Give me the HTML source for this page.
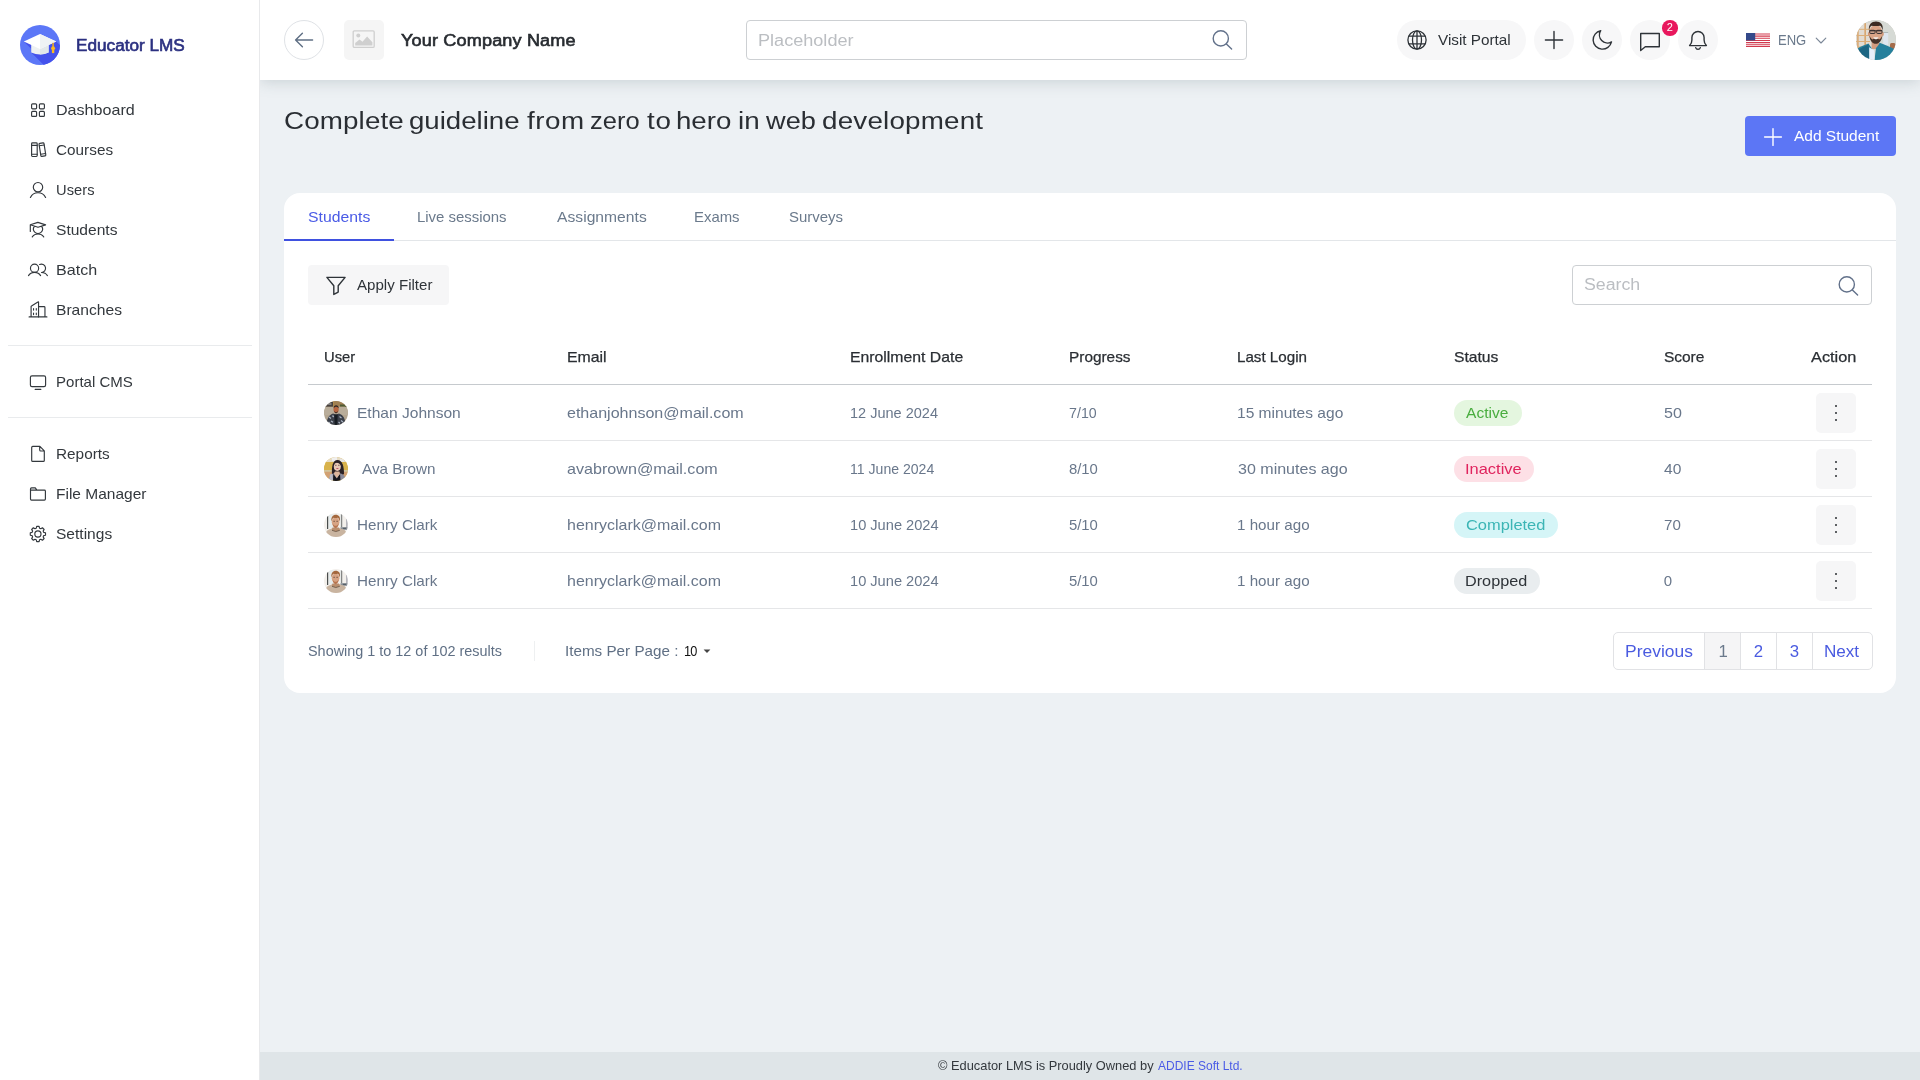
<!DOCTYPE html>
<html lang="en">
<head>
<meta charset="utf-8">
<title>Educator LMS</title>
<style>
*{box-sizing:border-box;margin:0;padding:0}
html,body{width:1920px;height:1080px;overflow:hidden}
body{font-family:"Liberation Sans",sans-serif;background:#edf1f4;color:#3b4046;position:relative;font-size:15px}
#wrap{position:absolute;left:0;top:0;width:1920px;height:1080px;will-change:transform}
.abs{position:absolute}
.t{position:absolute;white-space:nowrap;line-height:20px;height:20px;transform-origin:0 50%}
svg{display:block;position:absolute;overflow:visible}
/* sidebar */
#side{z-index:2;position:absolute;left:0;top:0;width:260px;height:1080px;background:#fff;border-right:1px solid #e8e9eb}
#logo{z-index:3;left:20px;top:25px;width:40px;height:40px}
#brand{z-index:3;left:76px;top:35.7px;font-size:16px;color:#2b3080;-webkit-text-stroke:.6px #2b3080}
.nav{z-index:3;color:#33383d;left:56px;font-size:15px}
.hr{z-index:3;position:absolute;left:8px;width:244px;height:1px;background:#e9ebed}
/* header */
#head{position:absolute;left:260px;top:0;width:1660px;height:80px;background:#fff;box-shadow:0 2px 14px rgba(115,132,138,.29)}
#back{left:284px;top:20px;width:40px;height:40px;border-radius:50%;border:1px solid #dfe2e6;background:#fff}
#imgph{left:344px;top:20px;width:40px;height:40px;border-radius:5px;background:#f5f5f5}
#company{left:400px;top:30.8px;font-size:16px;color:#272b30;-webkit-text-stroke:.6px #272b30}
#hsearch{left:746px;top:20px;width:501px;height:40px;border:1px solid #cdd0d3;border-radius:4px;background:#fff}
#ph{left:759px;top:30.8px;font-size:16px;color:#bbbec2}
.pill{position:absolute;background:#f7f7f8;border-radius:20px;height:44px;top:18px}
#visit{left:1437px;top:30px;font-size:15px;color:#2e3338}
#eng{left:1778px;top:30px;font-size:14.5px;color:#6b7a8c}
#badge{left:1662px;top:20.2px;width:15.6px;height:15.6px;border-radius:50%;background:#e8175d;color:#fff;font-size:11px;line-height:15.6px;text-align:center}
#avatar{left:1856px;top:20px;width:40px;height:40px;border-radius:50%;overflow:hidden;background:#c9c4bb}
/* title */
.tw{position:absolute;top:0;transform-origin:0 50%}
#title{left:284px;top:103.2px;width:720px;font-size:24.6px;line-height:36px;height:36px;color:#2a2e33}
#addbtn{left:1745px;top:116px;width:151px;height:40.4px;border-radius:4px;background:#5c76f5}
#addtxt{left:1793px;top:126.4px;color:#fff;font-size:15px}
/* card */
#card{left:284px;top:193px;width:1612px;height:500px;border-radius:16px;background:#fff}
#tabline{left:284px;top:240px;width:1612px;height:1px;background:#e3e6e9}
#tabact{left:284px;top:239px;width:110px;height:2px;background:#3f51e0}
.tab{top:207px;color:#6b7a8c;font-size:15px}
#filter{left:308px;top:265px;width:141px;height:40px;border-radius:4px;background:#f6f6f7}
#filtertxt{left:356px;top:275px;color:#2e3338}
#tsearch{left:1572px;top:265px;width:300px;height:40px;border:1px solid #cdd0d3;border-radius:4px;background:#fff}
#tsph{left:1584px;top:275.3px;font-size:16px;color:#bbbec2}
.th{top:347px;color:#2a2e33;font-size:15px;-webkit-text-stroke:.25px #2a2e33}
.line{position:absolute;left:308px;width:1564px;height:1px;background:#e5e6e8}
.td{color:#69778b;font-size:15px}
.av{position:absolute;left:324px;width:24px;height:24px;border-radius:50%;overflow:hidden}
.bdg{position:absolute;left:1454px;height:25.4px;border-radius:13px}
.act{position:absolute;left:1816px;width:40px;height:40px;border-radius:5px;background:#f6f6f7}
.dot{position:absolute;left:18.8px;width:2.4px;height:2.4px;border-radius:50%;background:#2a2e33}
.r1{top:403px}.r2{top:459px}.r3{top:515px}.r4{top:571px}
/* pagination */
#pager{left:1613px;top:632px;width:260px;height:38px;border:1px solid #e1e2e5;border-radius:5px;background:#fff;overflow:hidden}
.pg{top:642px;font-size:16.8px;color:#4a5be0}
/* footer */
#foot{left:260px;top:1052px;width:1660px;height:28px;background:#dfe5e8}
#foottxt{left:938px;top:1056.4px;font-size:13px;color:#33383d}
#footlink{left:1157px;top:1056.4px;font-size:13px;color:#4a5be6}
/*LS*/
#addtxt{letter-spacing:-0.010px;margin-left:0.80px;transform:scaleX(1.0339)}
#brand{letter-spacing:0.008px;margin-left:0.30px;transform:scaleX(1.0722)}
#company{letter-spacing:0.133px;margin-left:1.05px;transform:scaleX(1.1300)}
#eng{letter-spacing:-0.056px;margin-left:0.30px;transform:scaleX(0.8992)}
#filtertxt{letter-spacing:0.014px;margin-left:0.55px;transform:scaleX(1.0040)}
#footlink{letter-spacing:0.004px;margin-left:1.30px;transform:scaleX(0.9218)}
#foottxt{letter-spacing:-0.003px;margin-left:-0.20px;transform:scaleX(0.9876)}
#h0{letter-spacing:0.000px;margin-left:-0.20px;transform:scaleX(0.9836)}
#h1{letter-spacing:0.000px;margin-left:0.05px;transform:scaleX(1.0563)}
#h2{letter-spacing:0.007px;margin-left:-0.45px;transform:scaleX(1.0515)}
#h3{letter-spacing:-0.000px;margin-left:0.30px;transform:scaleX(1.0256)}
#h4{letter-spacing:-0.011px;margin-left:0.05px;transform:scaleX(1.0119)}
#h5{letter-spacing:-0.038px;margin-left:0.30px;transform:scaleX(1.0446)}
#h6{letter-spacing:-0.048px;margin-left:0.30px;transform:scaleX(1.0355)}
#h7{letter-spacing:0.009px;margin-left:0.55px;transform:scaleX(1.0878)}
#ipp{letter-spacing:0.003px;margin-left:-0.95px;transform:scaleX(1.0147)}
#n0{letter-spacing:0.006px;margin-left:-0.20px;transform:scaleX(1.0719)}
#n1{letter-spacing:0.025px;margin-left:-0.20px;transform:scaleX(1.0193)}
#n2{letter-spacing:0.051px;margin-left:0.05px;transform:scaleX(0.9773)}
#n3{letter-spacing:-0.014px;margin-left:-0.20px;transform:scaleX(1.0398)}
#n4{letter-spacing:0.012px;margin-left:-0.20px;transform:scaleX(1.0723)}
#n5{letter-spacing:-0.000px;margin-left:-0.20px;transform:scaleX(1.0407)}
#n6{letter-spacing:0.006px;margin-left:-0.20px;transform:scaleX(1.0014)}
#n7{letter-spacing:0.008px;margin-left:-0.20px;transform:scaleX(1.0217)}
#n8{letter-spacing:0.004px;margin-left:-0.20px;transform:scaleX(1.0331)}
#n9{letter-spacing:0.007px;margin-left:-0.20px;transform:scaleX(1.0351)}
#p0{letter-spacing:0.014px;margin-left:-1.45px;transform:scaleX(1.0387)}
#p1{letter-spacing:0.000px;margin-left:-0.45px;transform:scaleX(1.0000)}
#p2{letter-spacing:0.000px;margin-left:-0.20px;transform:scaleX(1.0000)}
#p3{letter-spacing:0.000px;margin-left:-0.20px;transform:scaleX(1.0000)}
#p4{letter-spacing:-0.049px;margin-left:-0.95px;transform:scaleX(1.0212)}
#ph{letter-spacing:0.004px;margin-left:-0.95px;transform:scaleX(1.1300)}
#r0c0{letter-spacing:-0.004px;margin-left:-0.70px;transform:scaleX(1.0373)}
#r0c1{letter-spacing:-0.012px;margin-left:0.05px;transform:scaleX(1.0702)}
#r0c2{letter-spacing:-0.005px;margin-left:-0.20px;transform:scaleX(0.9681)}
#r0c3{letter-spacing:0.035px;margin-left:0.05px;transform:scaleX(0.9442)}
#r0c4{letter-spacing:0.004px;margin-left:-0.20px;transform:scaleX(1.0357)}
#r0c5{letter-spacing:-0.000px;margin-left:-0.20px;transform:scaleX(1.0373)}
#r0c6{letter-spacing:0.047px;margin-left:0.05px;transform:scaleX(1.0712)}
#r1c0{letter-spacing:0.006px;margin-left:0.30px;transform:scaleX(1.0154)}
#r1c1{letter-spacing:0.003px;margin-left:0.05px;transform:scaleX(1.0746)}
#r1c2{letter-spacing:0.010px;margin-left:-0.20px;transform:scaleX(0.9371)}
#r1c3{letter-spacing:-0.084px;margin-left:0.30px;transform:scaleX(0.9912)}
#r1c4{letter-spacing:-0.007px;margin-left:0.80px;transform:scaleX(1.0696)}
#r1c5{letter-spacing:-0.000px;margin-left:-1.20px;transform:scaleX(1.0960)}
#r1c6{letter-spacing:0.048px;margin-left:-0.20px;transform:scaleX(1.0382)}
#r2c0{letter-spacing:0.000px;margin-left:-0.70px;transform:scaleX(1.0161)}
#r2c1{letter-spacing:0.003px;margin-left:0.30px;transform:scaleX(1.0657)}
#r2c2{letter-spacing:-0.009px;margin-left:-0.20px;transform:scaleX(0.9754)}
#r2c3{letter-spacing:-0.084px;margin-left:0.30px;transform:scaleX(0.9912)}
#r2c4{letter-spacing:0.022px;margin-left:-0.20px;transform:scaleX(1.0093)}
#r2c5{letter-spacing:-0.023px;margin-left:-0.20px;transform:scaleX(1.0968)}
#r2c6{letter-spacing:0.050px;margin-left:-0.20px;transform:scaleX(1.0067)}
#r3c0{letter-spacing:0.000px;margin-left:-0.70px;transform:scaleX(1.0161)}
#r3c1{letter-spacing:0.003px;margin-left:0.30px;transform:scaleX(1.0657)}
#r3c2{letter-spacing:-0.009px;margin-left:-0.20px;transform:scaleX(0.9754)}
#r3c3{letter-spacing:-0.084px;margin-left:0.30px;transform:scaleX(0.9912)}
#r3c4{letter-spacing:0.022px;margin-left:-0.20px;transform:scaleX(1.0093)}
#r3c5{letter-spacing:-0.000px;margin-left:-1.20px;transform:scaleX(1.0815)}
#r3c6{letter-spacing:0.000px;margin-left:-0.20px;transform:scaleX(1.0000)}
#showing{letter-spacing:0.002px;margin-left:-0.20px;transform:scaleX(0.9606)}
#tb0{letter-spacing:0.000px;margin-left:-0.20px;transform:scaleX(1.0520)}
#tb1{letter-spacing:-0.013px;margin-left:-0.70px;transform:scaleX(0.9966)}
#tb2{letter-spacing:0.019px;margin-left:1.30px;transform:scaleX(1.0428)}
#tb3{letter-spacing:0.000px;margin-left:-0.70px;transform:scaleX(0.9943)}
#tb4{letter-spacing:-0.008px;margin-left:-0.20px;transform:scaleX(0.9981)}
#ten{letter-spacing:-1.059px;margin-left:-0.70px;transform:scaleX(0.8500)}
#tsph{letter-spacing:-0.009px;margin-left:0.05px;transform:scaleX(1.1103)}
#tw0{letter-spacing:0.101px;margin-left:-0.80px;transform:scaleX(1.1300)}
#tw1{letter-spacing:-0.006px;margin-left:-1.30px;transform:scaleX(1.1233)}
#tw2{letter-spacing:0.457px;margin-left:0.15px;transform:scaleX(1.1300)}
#tw3{letter-spacing:0.064px;margin-left:-0.65px;transform:scaleX(1.0361)}
#tw4{letter-spacing:0.619px;margin-left:0.05px;transform:scaleX(1.1300)}
#tw5{letter-spacing:-0.030px;margin-left:-1.90px;transform:scaleX(1.1247)}
#tw6{letter-spacing:0.088px;margin-left:-0.95px;transform:scaleX(1.1300)}
#tw7{letter-spacing:0.068px;margin-left:0.35px;transform:scaleX(1.1034)}
#tw8{letter-spacing:0.168px;margin-left:-0.90px;transform:scaleX(1.1300)}
#visit{letter-spacing:-0.018px;margin-left:1.05px;transform:scaleX(1.0192)}
/*ENDLS*/
</style>
</head>
<body>
<div id="wrap">
<div id="side"></div>
<svg id="logo" viewBox="0 0 40 40" width="40" height="40" style="left:20px;top:25px">
<defs><clipPath id="lc"><circle cx="20" cy="20" r="20"/></clipPath></defs>
<circle cx="20" cy="20" r="20" fill="#5c77f7"/>
<g clip-path="url(#lc)"><path d="M3.8 16.4 L11.2 23.8 L11.2 27.4 L41.2 57.4 L66.2 46.4 L36.2 16.4 Z" fill="#4452ec"/></g>
<path d="M11.2 19 L11.2 27.4 Q20 31.4 28.6 27.4 L28.6 19 Z" fill="#eef1f2"/>
<path d="M20 23 L28.6 19 L28.6 27.4 Q24.3 29.4 20 29.4 Z" fill="#e2e8e9"/>
<path d="M3.8 16.4 L20 9.1 L36.2 16.4 L20 23.9 Z" fill="#ffffff"/>
<path d="M20 9.1 L36.2 16.4 L20 23.9 Z" fill="#eff3f4"/>
<rect x="32.3" y="17.8" width="1.6" height="6" fill="#e6a92f"/>
<circle cx="33.1" cy="23.3" r="1.95" fill="#fdbb1d"/>
<rect x="31.9" y="24.6" width="2.4" height="3.5" fill="#fdbb1d"/>
</svg>
<div class="t" id="brand">Educator LMS</div>
<svg id="navicons" width="260" height="560" viewBox="0 0 260 560" style="left:0;top:0;z-index:3" fill="none" stroke="#33383d" stroke-width="1.15" stroke-linecap="round" stroke-linejoin="round">
<!-- dashboard -->
<rect x="31.6" y="103.8" width="5" height="5" rx="1"/><rect x="39.4" y="103.8" width="5" height="5" rx="1"/>
<rect x="31.6" y="111.4" width="5" height="5" rx="1"/><rect x="39.4" y="111.4" width="5" height="5" rx="1"/>
<!-- courses -->
<rect x="31.6" y="142.9" width="5.6" height="13.6" rx=".9"/><path d="M31.6 145.3h5.60M31.6 154.2h5.60"/>
<g transform="rotate(-9 42.5 149.5)"><rect x="39.9" y="143" width="5" height="13.2" rx=".9"/><path d="M39.9 145.3h5M39.9 153.9h5"/></g>
<!-- users -->
<circle cx="38" cy="187.2" r="4.7"/><path d="M30.4 197.4C32 194.2 34.8 192.7 38 192.7S44 194.2 45.6 197.4"/>
<!-- students -->
<path d="M30.3 224.8L37.9 222.4L45.6 224.9L38 227.3ZM30.3 224.8v6.7M34.3 226.4A4.5 4.5 0 1 0 41.7 226.4"/>
<path d="M32.3 236.9C33.5 235 35.6 234 38 234s4.5 1 5.7 2.9"/>
<!-- batch -->
<circle cx="34.55" cy="268.3" r="4.1"/><path d="M28.5 275.6c1.2-2.1 3.3-3.3 6.05-3.3s4.85 1.2 6.05 3.3"/>
<path d="M39.6 264.5a4.2 4.2 0 1 1 1.9 8c2.8 0 4.7 1.1 5.9 3.1"/>
<!-- branches -->
<path d="M29.1 316.9h17.8M31.1 316.9v-10.3a.8.8 0 0 1 .4-.7l6.4-4a.4.4 0 0 1 .65.35v14.9M38.55 306.55h5.5a.9.9 0 0 1 .9.9v9.45"/>
<path d="M33.55 308.6v1.5M36.3 308.6v1.5M33.55 313.1v1.5M36.3 313.1v1.5" stroke-width="1.1"/>
<!-- portal -->
<rect x="30.4" y="375.8" width="15.2" height="10.8" rx="1.6"/><path d="M35.2 389.4h5.60"/>
<!-- reports -->
<path d="M31.7 447.4a1 1 0 0 1 1-1h7.2l4.4 4.4v9.60a1 1 0 0 1-1 1h-10.6a1 1 0 0 1-1-1zM39.7 446.6v3.4a1 1 0 0 0 1 1h3.4"/>
<!-- folder -->
<path d="M30.5 488.9a1 1 0 0 1 1-1h3.8l1.6 2.2h7.5a1 1 0 0 1 1 1v8a1 1 0 0 1-1 1h-12.9a1 1 0 0 1-1-1zM30.5 490.1h6.4"/>
<!-- settings -->
<circle cx="37.9" cy="534" r="3.1"/>
<path d="M36.25 528.23 L36.70 526.39 L39.10 526.39 L39.55 528.23 L40.81 528.75 L42.43 527.77 L44.13 529.47 L43.15 531.09 L43.67 532.35 L45.51 532.80 L45.51 535.20 L43.67 535.65 L43.15 536.91 L44.13 538.53 L42.43 540.23 L40.81 539.25 L39.55 539.77 L39.10 541.61 L36.70 541.61 L36.25 539.77 L34.99 539.25 L33.37 540.23 L31.67 538.53 L32.65 536.91 L32.13 535.65 L30.29 535.20 L30.29 532.80 L32.13 532.35 L32.65 531.09 L31.67 529.47 L33.37 527.77 L34.99 528.75Z" stroke-linejoin="round"/>
</svg>
<div class="t nav" id="n0" style="top:100px">Dashboard</div>
<div class="t nav" id="n1" style="top:140px">Courses</div>
<div class="t nav" id="n2" style="top:180px">Users</div>
<div class="t nav" id="n3" style="top:220px">Students</div>
<div class="t nav" id="n4" style="top:260px">Batch</div>
<div class="t nav" id="n5" style="top:300px">Branches</div>
<div class="t nav" id="n6" style="top:372px">Portal CMS</div>
<div class="t nav" id="n7" style="top:444px">Reports</div>
<div class="t nav" id="n8" style="top:484px">File Manager</div>
<div class="t nav" id="n9" style="top:524px">Settings</div>
<div class="hr" style="top:345px"></div><div class="hr" style="top:417px"></div>
<div id="head"></div>
<div class="abs" id="back"></div>
<svg width="20" height="16" viewBox="0 0 20 16" style="left:294px;top:32px" fill="none" stroke="#5f6f84" stroke-width="1.4" stroke-linecap="round" stroke-linejoin="round"><path d="M18.6 8H1.6M8.4 1.2L1.6 8l6.8 6.8"/></svg>
<div class="abs" id="imgph"></div>
<svg width="24" height="20" viewBox="0 0 24 20" style="left:352px;top:30px"><rect x="1.2" y=".8" width="21" height="16.6" rx="1.2" fill="none" stroke="#cfcfcf" stroke-width="1.3"/><circle cx="6.3" cy="5.6" r="2" fill="#cfcfcf"/><path d="M3.2 15.4V13l4.3-3.6 3 2.4 4.6-5.2 5.3 5.6v3.2z" fill="#cfcfcf"/></svg>
<div class="t" id="company">Your Company Name</div>
<div class="abs" id="hsearch"></div>
<div class="t" id="ph">Placeholder</div>
<svg width="22" height="22" viewBox="0 0 22 22" style="left:1211px;top:29px" fill="none" stroke="#62718a" stroke-width="1.4" stroke-linecap="round"><circle cx="9.8" cy="9.4" r="7.6"/><path d="M15.4 15l5.2 5.1"/></svg>
<div class="pill" style="left:1397px;width:129px;top:20px;height:40px"></div>
<svg width="20" height="20" viewBox="0 0 20 20" style="left:1407px;top:30px" fill="none" stroke="#2e3338" stroke-width="1.3"><circle cx="10" cy="10" r="9.1"/><ellipse cx="10" cy="10" rx="4.5" ry="9.1"/><path d="M10 .9v18.2M1.9 6.2h16.2M1.9 13.8h16.2"/></svg>
<div class="t" id="visit">Visit Portal</div>
<div class="pill" style="left:1534px;width:40px;top:20px;height:40px"></div>
<svg width="20" height="20" viewBox="0 0 20 20" style="left:1544px;top:30px" fill="none" stroke="#2e3338" stroke-width="1.4" stroke-linecap="round"><path d="M10 1.4v17.2M1.4 10h17.2"/></svg>
<div class="pill" style="left:1582px;width:40px;top:20px;height:40px"></div>
<svg width="20" height="20" viewBox="0 0 20 20" style="left:1592px;top:30px" fill="none" stroke="#2e3338" stroke-width="1.4" stroke-linejoin="round"><path d="M8.7 .7A9.3 9.3 0 1 0 19.5 11.9A8 8 0 0 1 8.7 .7z"/></svg>
<div class="pill" style="left:1630px;width:40px;top:20px;height:40px"></div>
<svg width="22" height="20" viewBox="0 0 22 20" style="left:1639px;top:32px" fill="none" stroke="#2e3338" stroke-width="1.4" stroke-linejoin="round"><path d="M1.7 1.5h18.6v13.2H6.3l-4.6 3.8z"/></svg>
<div class="abs" id="badge">2</div>
<div class="pill" style="left:1678px;width:40px;top:20px;height:40px"></div>
<svg width="20" height="20" viewBox="0 0 20 20" style="left:1688px;top:30px" fill="none" stroke="#2e3338" stroke-width="1.4" stroke-linecap="round" stroke-linejoin="round"><path d="M1.6 15.6h16.8c-1.6-1.5-2.3-3.3-2.3-5.6V7.60a6.10 6.10 0 0 0-12.2 0V10c0 2.30-.7 4.10-2.30 5.6zM7.7 17.6a2.4 2.4 0 0 0 4.6 0"/></svg>
<svg width="24" height="14" viewBox="0 0 24 14" style="left:1746px;top:33px"><rect width="24" height="14" fill="#fff"/><path d="M0 1h24M0 3.15h24M0 5.3h24M0 7.45h24M0 9.60h24M0 11.75h24M0 13.5h24" stroke="#d23a4e" stroke-width="1.1"/><rect width="9.2" height="7.4" fill="#34498a"/></svg>
<div class="t" id="eng">ENG</div>
<svg width="12" height="8" viewBox="0 0 12 8" style="left:1815px;top:37px" fill="none" stroke="#7b8797" stroke-width="1.15" stroke-linecap="round" stroke-linejoin="round"><path d="M1.2 1.2L6 6l4.8-4.8"/></svg>
<div class="abs" id="avatar"><svg width="40" height="40" viewBox="0 0 40 40" style="left:0;top:0">
<defs><filter id="bl1" x="-10%" y="-10%" width="120%" height="120%"><feGaussianBlur stdDeviation=".55"/></filter></defs>
<rect width="40" height="40" fill="#d6dad5"/>
<g filter="url(#bl1)">
<rect x="-2" y="3" width="17" height="27" fill="#e2dcd3"/>
<rect x="8.4" y="3" width="1.5" height="26" fill="#d7a268"/><rect x="1.2" y="8" width="1.4" height="22" fill="#d7a268"/>
<path d="M0 9.3h14M0 15.5h14M0 21.5h14M0 27h12" stroke="#dcae78" stroke-width="1"/>
<rect x="27.2" y="12.3" width="5" height="12.6" fill="#dfe6ef"/><rect x="27.2" y="12" width="5" height="1" fill="#aeb8b8"/>
<rect x="34" y="23" width="5.5" height="6" rx="1.5" fill="#a56d4c"/>
<path d="M15.6 20h7.4v9h-7.4z" fill="#d29c80"/>
<path d="M-2 40V31c3-3 8-5 14.5-7.5l3 4.5 3 12 1.5-12c1.5-1.5 3-3.5 3.6-5.2 5 2.2 11 4 16.4 7.2v10z" fill="#27809c"/>
<path d="M2 30c3-2 7-4 10.5-5.5l1 15.5H8z" fill="#1d6683"/>
<path d="M13.2 27.2l5.1 3.3.4 9.5h-5.5z" fill="#e7effa"/>
<ellipse cx="19.8" cy="13.6" rx="6.9" ry="8.8" fill="#daa487"/>
<ellipse cx="12.9" cy="14" rx="1" ry="2" fill="#d09879"/><ellipse cx="26.8" cy="14" rx="1" ry="2" fill="#d09879"/>
<path d="M13 10.5c-.8-6 2.5-8.9 7-8.9s7.7 3 6.6 8.9c-.5-2.5-1.3-4-2.4-4.8-3 .6-6.5.5-8.8 0-1.2.9-2 2.5-2.4 4.8z" fill="#3b2b23"/>
<path d="M13.4 15.5c.3 5 3 8.3 6.4 8.3s6.2-3.3 6.5-8.3c-1 2.5-2 3.5-3.2 4-1.2-1.2-5.3-1.2-6.5 0-1.2-.5-2.2-1.5-3.2-4z" fill="#46332a"/>
<path d="M17.3 17.3h5.2c-.5 1.5-1.5 2.0-2.6 2.0s-2.1-.5-2.6-2.0z" fill="#f4eeea"/>
<rect x="13.7" y="10.3" width="5.4" height="3.2" rx="1.1" fill="#c8a08c" stroke="#30292a" stroke-width=".9"/><rect x="20.6" y="10.3" width="5.4" height="3.2" rx="1.1" fill="#c8a08c" stroke="#30292a" stroke-width=".9"/>
<path d="M13.2 10.8h13.2" stroke="#30292a" stroke-width="1"/>
</g></svg></div>
<div class="t" id="title"><span class="tw" id="tw0" style="left:0.3px">Complete</span> <span class="tw" id="tw1" style="left:126.3px">guideline</span> <span class="tw" id="tw2" style="left:242.7px">from</span> <span class="tw" id="tw3" style="left:306.6px">zero</span> <span class="tw" id="tw4" style="left:362.5px">to</span> <span class="tw" id="tw5" style="left:394.1px">hero</span> <span class="tw" id="tw6" style="left:455.0px">in</span> <span class="tw" id="tw7" style="left:481.6px">web</span> <span class="tw" id="tw8" style="left:538.6px">development</span></div>
<div class="abs" id="addbtn"></div>
<svg width="20" height="20" viewBox="0 0 20 20" style="left:1763px;top:126.5px" fill="none" stroke="#fff" stroke-width="1.4" stroke-linecap="round"><path d="M10 1.6v16.8M1.6 10h16.8"/></svg>
<div class="t" id="addtxt">Add Student</div>
<div id="foot" class="abs"></div>
<div class="abs" id="card"></div>
<div class="abs" id="tabline"></div>
<div class="abs" id="tabact"></div>
<div class="t tab" id="tb0" style="left:308px;color:#4a5be6">Students</div>
<div class="t tab" id="tb1" style="left:418px">Live sessions</div>
<div class="t tab" id="tb2" style="left:556px">Assignments</div>
<div class="t tab" id="tb3" style="left:695px">Exams</div>
<div class="t tab" id="tb4" style="left:789px">Surveys</div>
<div class="abs" id="filter"></div>
<svg width="22" height="20" viewBox="0 0 22 20" style="left:325px;top:276px" fill="none" stroke="#2e3338" stroke-width="1.4" stroke-linejoin="round"><path d="M1.9 1.4h18.2l-6.9 8.4v6.3l-4.4 2.3V9.8z"/></svg>
<div class="t" id="filtertxt">Apply Filter</div>
<div class="abs" id="tsearch"></div>
<div class="t" id="tsph">Search</div>
<svg width="22" height="22" viewBox="0 0 22 22" style="left:1837px;top:274.5px" fill="none" stroke="#62718a" stroke-width="1.4" stroke-linecap="round"><circle cx="9.8" cy="9.4" r="7.6"/><path d="M15.4 15l5.2 5.1"/></svg>
<div class="t th" id="h0" style="left:324px">User</div>
<div class="t th" id="h1" style="left:567px">Email</div>
<div class="t th" id="h2" style="left:850px">Enrollment Date</div>
<div class="t th" id="h3" style="left:1069px">Progress</div>
<div class="t th" id="h4" style="left:1237px">Last Login</div>
<div class="t th" id="h5" style="left:1454px">Status</div>
<div class="t th" id="h6" style="left:1664px">Score</div>
<div class="t th" id="h7" style="left:1810px">Action</div>
<div class="line" style="top:384px;background:#c6cace"></div>
<div class="av" id="av0" style="top:401px"><svg width="24" height="24" viewBox="0 0 24 24" style="left:0;top:0"><defs><filter id="bl2" x="-10%" y="-10%" width="120%" height="120%"><feGaussianBlur stdDeviation=".45"/></filter></defs>
<rect width="24" height="24" fill="#b3a590"/><g filter="url(#bl2)">
<rect x="-1" y="-1" width="26" height="6.5" fill="#a08052"/>
<rect x="1" y="1" width="8" height="4.6" fill="#46423f"/><rect x="3.5" y="2.2" width="4" height="1.6" fill="#8d8c8a"/>
<rect x="9" y="0" width="1" height="6" fill="#b08a4c"/>
<rect x="16" y="3.5" width="5" height="2" fill="#4d5a34"/><rect x="21" y="5" width="2" height="6" fill="#5a6a40"/>
<rect x="-1" y="6" width="26" height="8" fill="#b9ad9a"/>
<path d="M2.5 24c.3-6 2-10 6.5-11.6l3 1.2 3-1.2c4.5 1.5 6.3 5.5 6.7 11.6z" fill="#3a3f49"/>
<path d="M5 16l2 1.5M7 20l2 1.2M4.5 21l1.5 1.5M15.5 15.5l2 1.5M17 19.5l2 1.5M14.5 21l1.5 1.2M8.5 14.5l1.2 1.5M18 23l1.5-1" stroke="#aab4c2" stroke-width="1.3"/>
<path d="M10.3 13.5h3.4l-.5 10.5h-2.5z" fill="#171a22"/>
<ellipse cx="12.1" cy="8.4" rx="2.6" ry="3.3" fill="#b9663f"/>
<path d="M9.6 7.5c0-2.5 1.2-3.3 2.5-3.3s2.8.8 2.6 3.3c-.5-1.2-1.5-1.7-2.6-1.7s-2 .5-2.5 1.7z" fill="#2c2420"/>
<path d="M10.0 9.5c.3 2 1.2 2.8 2.1 2.8s1.8-.8 2.1-2.8c-.6 1.2-1.3 1.5-2.1 1.5s-1.5-.3-2.1-1.5z" fill="#4a3026"/>
</g></svg></div>
<div class="t td" id="r0c0" style="left:358px;top:403px">Ethan Johnson</div>
<div class="t td" id="r0c1" style="left:567px;top:403px">ethanjohnson@mail.com</div>
<div class="t td" id="r0c2" style="left:850px;top:403px">12 June 2024</div>
<div class="t td" id="r0c3" style="left:1069px;top:403px">7/10</div>
<div class="t td" id="r0c4" style="left:1237px;top:403px">15 minutes ago</div>
<div class="bdg" style="top:400.2px;width:67.5px;background:#e4f6df"></div>
<div class="t td" id="r0c5" style="left:1466px;top:403px;color:#49ad3f">Active</div>
<div class="t td" id="r0c6" style="left:1664px;top:403px">50</div>
<div class="act" style="top:393px"><i class="dot" style="top:11.8px"></i><i class="dot" style="top:18.8px"></i><i class="dot" style="top:25.8px"></i></div>
<div class="line" style="top:440px"></div>
<div class="av" id="av1" style="top:457px"><svg width="24" height="24" viewBox="0 0 24 24" style="left:0;top:0"><defs><filter id="bl3" x="-10%" y="-10%" width="120%" height="120%"><feGaussianBlur stdDeviation=".45"/></filter></defs>
<rect width="24" height="24" fill="#d9b654"/><g filter="url(#bl3)">
<rect x="-1" y="-1" width="26" height="6" fill="#e6dcc6"/><rect x="8" y="-1" width="5" height="5" fill="#f0efee"/><rect x="16" y="2" width="4" height="3" fill="#e9e6e2"/>
<rect x="-1" y="5" width="26" height="9" fill="#d8b24c"/>
<rect x="-1" y="13.2" width="26" height="1.6" fill="#cfc9ae"/>
<rect x="-1" y="14.8" width="26" height="10" fill="#d2a173"/>
<path d="M8 18c-.5-8 .5-15.0 5.5-15.0s6.5 6.5 6.5 14.0l-3 2h-7z" fill="#2a2025"/>
<path d="M4.5 24c.5-4 2-6.5 4.5-7.5l8 0c3 1 4 3 4.5 5.0l-2 2.5z" fill="#8b8b9b"/>
<path d="M6 17.5l2.5-.8.5 7.3h-4z" fill="#b9bac6"/>
<path d="M9.3 17l3.5 4.5 3.2-5.0.5 7.5h-7.5z" fill="#15161c"/>
<path d="M11 14.5h4.5l.5 2.5-3.2 4-3-4.5z" fill="#dcb59c"/>
<ellipse cx="13.3" cy="9.6" rx="3.5" ry="4.3" fill="#e9c9b6"/>
<path d="M9.8 8.5c.2-3 2-4.3 4-4.3s3.5 1.5 3.2 4.5c-1-2-2.5-3-4.2-3s-2.3 1.2-3 2.8z" fill="#2a2025"/>
<rect x="12.3" y="11" width="2.2" height="1" rx=".5" fill="#c2566a"/>
<path d="M11 8.3h1.6M14 8.3h1.6" stroke="#5a4038" stroke-width=".7"/>
</g></svg></div>
<div class="t td" id="r1c0" style="left:362px;top:459px">Ava Brown</div>
<div class="t td" id="r1c1" style="left:567px;top:459px">avabrown@mail.com</div>
<div class="t td" id="r1c2" style="left:850px;top:459px">11 June 2024</div>
<div class="t td" id="r1c3" style="left:1069px;top:459px">8/10</div>
<div class="t td" id="r1c4" style="left:1237px;top:459px">30 minutes ago</div>
<div class="bdg" style="top:456.2px;width:79.5px;background:#fde0e6"></div>
<div class="t td" id="r1c5" style="left:1466px;top:459px;color:#e0245e">Inactive</div>
<div class="t td" id="r1c6" style="left:1664px;top:459px">40</div>
<div class="act" style="top:449px"><i class="dot" style="top:11.8px"></i><i class="dot" style="top:18.8px"></i><i class="dot" style="top:25.8px"></i></div>
<div class="line" style="top:496px"></div>
<div class="av" id="av2" style="top:513px"><svg width="24" height="24" viewBox="0 0 24 24" style="left:0;top:0"><defs><filter id="bl4" x="-10%" y="-10%" width="120%" height="120%"><feGaussianBlur stdDeviation=".45"/></filter></defs>
<rect width="24" height="24" fill="#f3f0ec"/><g filter="url(#bl4)">
<rect x="4.6" y="1" width="5" height="14" fill="#e6ecec"/><rect x="16" y="1" width="1.5" height="13" fill="#e6e8e6"/>
<rect x="3" y="3" width="1.2" height="13" fill="#4a4d4e"/><rect x="17.2" y="1" width="1" height="13" fill="#6b6d6e"/>
<rect x="22.3" y="6" width="1.2" height="10" fill="#9a9ca8"/>
<rect x="16.5" y="14.2" width="7" height="2.6" fill="#868d95"/><rect x="19" y="14.8" width="3" height="1" fill="#4e555c"/>
<path d="M1 24c.2-4 1.2-6.5 4-7.5l4-1.5h6l4.5 1.5c2.5 1 3.5 3.5 3.7 7.5z" fill="#c9b4a0"/>
<path d="M8.5 14.5h6.5l.8 2.5-4 1.5-4-1.5z" fill="#b98e6e"/>
<path d="M8 17.3l3.8 1.2 4-1.2" stroke="#6e5a48" stroke-width=".9" fill="none"/>
<ellipse cx="11.6" cy="9.2" rx="3.8" ry="4.8" fill="#d7a383"/>
<path d="M7.5 8.5c-.8-4.5 1.5-6.8 4.3-6.8s5.0 2 4.0 6.8c-.5-2-1.2-3.2-2-3.8-1.5.5-3.0.5-4.3 0-.8.6-1.5 1.8-2 3.8z" fill="#a4683e"/>
<path d="M8.6 10.5c.3 3 1.6 4.5 3 4.5s2.7-1.5 3-4.5c-.8 1.8-1.8 2.3-3 2.3s-2.2-.5-3-2.3z" fill="#b8744e"/>
<path d="M9.3 8.3h1.7M12.3 8.3h1.7" stroke="#5b4338" stroke-width=".7"/>
</g></svg></div>
<div class="t td" id="r2c0" style="left:358px;top:515px">Henry Clark</div>
<div class="t td" id="r2c1" style="left:567px;top:515px">henryclark@mail.com</div>
<div class="t td" id="r2c2" style="left:850px;top:515px">10 June 2024</div>
<div class="t td" id="r2c3" style="left:1069px;top:515px">5/10</div>
<div class="t td" id="r2c4" style="left:1237px;top:515px">1 hour ago</div>
<div class="bdg" style="top:512.2px;width:103.5px;background:#d5f5f7"></div>
<div class="t td" id="r2c5" style="left:1466px;top:515px;color:#3bb5b5">Completed</div>
<div class="t td" id="r2c6" style="left:1664px;top:515px">70</div>
<div class="act" style="top:505px"><i class="dot" style="top:11.8px"></i><i class="dot" style="top:18.8px"></i><i class="dot" style="top:25.8px"></i></div>
<div class="line" style="top:552px"></div>
<div class="av" id="av3" style="top:569px"><svg width="24" height="24" viewBox="0 0 24 24" style="left:0;top:0"><defs><filter id="bl5" x="-10%" y="-10%" width="120%" height="120%"><feGaussianBlur stdDeviation=".45"/></filter></defs>
<rect width="24" height="24" fill="#f3f0ec"/><g filter="url(#bl5)">
<rect x="4.6" y="1" width="5" height="14" fill="#e6ecec"/><rect x="16" y="1" width="1.5" height="13" fill="#e6e8e6"/>
<rect x="3" y="3" width="1.2" height="13" fill="#4a4d4e"/><rect x="17.2" y="1" width="1" height="13" fill="#6b6d6e"/>
<rect x="22.3" y="6" width="1.2" height="10" fill="#9a9ca8"/>
<rect x="16.5" y="14.2" width="7" height="2.6" fill="#868d95"/><rect x="19" y="14.8" width="3" height="1" fill="#4e555c"/>
<path d="M1 24c.2-4 1.2-6.5 4-7.5l4-1.5h6l4.5 1.5c2.5 1 3.5 3.5 3.7 7.5z" fill="#c9b4a0"/>
<path d="M8.5 14.5h6.5l.8 2.5-4 1.5-4-1.5z" fill="#b98e6e"/>
<path d="M8 17.3l3.8 1.2 4-1.2" stroke="#6e5a48" stroke-width=".9" fill="none"/>
<ellipse cx="11.6" cy="9.2" rx="3.8" ry="4.8" fill="#d7a383"/>
<path d="M7.5 8.5c-.8-4.5 1.5-6.8 4.3-6.8s5.0 2 4.0 6.8c-.5-2-1.2-3.2-2-3.8-1.5.5-3.0.5-4.3 0-.8.6-1.5 1.8-2 3.8z" fill="#a4683e"/>
<path d="M8.6 10.5c.3 3 1.6 4.5 3 4.5s2.7-1.5 3-4.5c-.8 1.8-1.8 2.3-3 2.3s-2.2-.5-3-2.3z" fill="#b8744e"/>
<path d="M9.3 8.3h1.7M12.3 8.3h1.7" stroke="#5b4338" stroke-width=".7"/>
</g></svg></div>
<div class="t td" id="r3c0" style="left:358px;top:571px">Henry Clark</div>
<div class="t td" id="r3c1" style="left:567px;top:571px">henryclark@mail.com</div>
<div class="t td" id="r3c2" style="left:850px;top:571px">10 June 2024</div>
<div class="t td" id="r3c3" style="left:1069px;top:571px">5/10</div>
<div class="t td" id="r3c4" style="left:1237px;top:571px">1 hour ago</div>
<div class="bdg" style="top:568.2px;width:85.5px;background:#e9edef"></div>
<div class="t td" id="r3c5" style="left:1466px;top:571px;color:#2e3338">Dropped</div>
<div class="t td" id="r3c6" style="left:1664px;top:571px">0</div>
<div class="act" style="top:561px"><i class="dot" style="top:11.8px"></i><i class="dot" style="top:18.8px"></i><i class="dot" style="top:25.8px"></i></div>
<div class="line" style="top:608px"></div>
<div class="t td" id="showing" style="left:308px;top:641px;color:#5f6f84">Showing 1 to 12 of 102 results</div>
<div class="abs" style="left:533.5px;top:641px;width:1px;height:20px;background:#eef0f1"></div>
<div class="t td" id="ipp" style="left:566px;top:640.5px;color:#5f6f84">Items Per Page :</div>
<div class="t td" id="ten" style="left:685px;top:640.5px;color:#111">10</div>
<svg width="8" height="5" viewBox="0 0 8 5" style="left:703.3px;top:649px"><path d="M.6 .6h6.8L4 4z" fill="#444"/></svg>
<div class="abs" id="pager"><div class="abs" style="left:90px;top:0;width:36px;height:36px;background:#f5f5f6;border-left:1px solid #e1e2e5"></div><div class="abs" style="left:126px;top:0;width:1px;height:36px;background:#e1e2e5"></div><div class="abs" style="left:162px;top:0;width:1px;height:36px;background:#e1e2e5"></div><div class="abs" style="left:198px;top:0;width:1px;height:36px;background:#e1e2e5"></div></div>
<div class="t pg" id="p0" style="left:1626px">Previous</div>
<div class="t pg" id="p1" style="left:1719px;color:#6b7a8c">1</div>
<div class="t pg" id="p2" style="left:1754px">2</div>
<div class="t pg" id="p3" style="left:1790px">3</div>
<div class="t pg" id="p4" style="left:1825px">Next</div>
<div class="t" id="foottxt">© Educator LMS is Proudly Owned by</div>
<div class="t" id="footlink">ADDIE Soft Ltd.</div>
</div>
</body>
</html>
